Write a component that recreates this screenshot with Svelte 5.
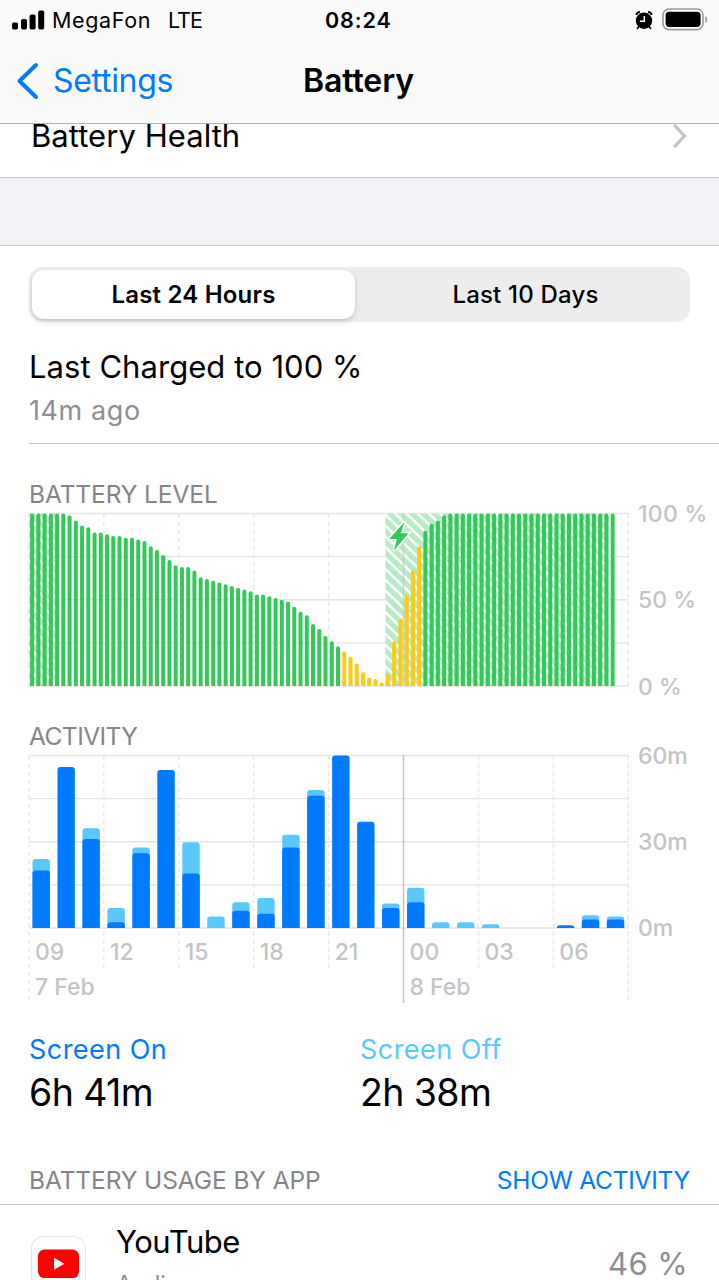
<script>
  // Battery level in percent, one value per quarter of an hour
  const levels = [
    100, 100, 100, 100, 100, 100, 99, 96, 93, 92, 89, 89, 88, 87, 87, 86, 86, 85, 84,
    81, 79, 76, 73, 70, 69, 69, 67, 63, 62, 61, 60, 59, 58, 57, 56, 55, 53, 53,
    52, 51, 50, 49, 46, 43, 41, 36, 33, 29, 26, 23, 20, 17, 13, 8, 5, 4, 2, 7,
    26, 39, 53, 67, 81, 90, 94, 96, 99, ...Array(27).fill(100)
  ];

  // Yellow while low power mode is on
  const lowPower = (i) => i >= 50 && i <= 62;

  // Minutes per hour: [screen on, total]
  const activity = [
    [20, 24], [56, 56], [31, 34.7], [2, 7], [26, 28], [55, 55], [19, 29.8], [0, 4],
    [6, 9], [5, 10.4], [28, 32.4], [46, 48], [60, 60], [37, 37], [7, 8.5], [9, 14],
    [0, 2], [0, 2], [0, 1.3], [0, 0], [0, 0], [1, 1], [3, 4.4], [3, 4]
  ];

  const hours = ['09', '12', '15', '18', '21', '00', '03', '06'];
  const rows = [0, 1, 2, 3, 4];

  const left = 29;
  const chartHeight = 172.5;
  const hourWidth = 24.97;
  const slot = hourWidth / 4;
  const right = left + 24 * hourWidth;

  let selected = $state(0);

  // Bar with rounded top corners standing on the base line
  function bar(x, width, base, height, radius) {
    const r = Math.min(radius, height);
    return `M${x} ${base}v${-(height - r)}q0 ${-r} ${r} ${-r}h${width - 2 * r}q${r} 0 ${r} ${r}v${height - r}z`;
  }
</script>

<main>
  <header>
    <div class="status">
      <svg class="signal" width="32" height="20" viewBox="0 0 32 20">
        <rect x="0" y="12.5" width="6" height="7" rx="1.7" />
        <rect x="9" y="9" width="6" height="10.5" rx="1.7" />
        <rect x="17.6" y="4.5" width="6" height="15" rx="1.7" />
        <rect x="26.2" y="0.5" width="6" height="19" rx="1.7" />
      </svg>
      <span class="carrier">MegaFon</span>
      <span class="network">LTE</span>
      <span class="clock">08:24</span>
      <svg class="alarm" width="18" height="19" viewBox="0 0 18 19">
        <circle cx="9" cy="9.8" r="8.2" />
        <path d="M4 15.5 2 18M14 15.5 16 18" stroke="#000" stroke-width="1.6" />
        <path d="M1.2 3.8Q2.2 1.2 5 1M16.8 3.8Q15.8 1.2 13 1" fill="none" stroke="#000" stroke-width="2" />
        <path d="M9.3 5v5.3H4.8" fill="none" stroke="#fff" stroke-width="1.5" />
      </svg>
      <svg class="cell" width="46" height="23" viewBox="0 0 46 23">
        <rect x="1" y="1" width="40" height="20.6" rx="6" fill="#fff" stroke="#999" stroke-width="1.6" />
        <rect x="3.6" y="3.7" width="35" height="15.2" rx="3.6" />
        <path d="M43.3 8v7q2-1 2-3.5T43.3 8z" fill="#999" />
      </svg>
    </div>
    <nav>
      <svg width="24" height="38" viewBox="0 0 24 38">
        <path d="M20 3 3.5 19 20 35" fill="none" stroke="#007aff" stroke-width="4" stroke-linecap="round" stroke-linejoin="round" />
      </svg>
      <span class="back">Settings</span>
      <h1>Battery</h1>
    </nav>
  </header>

  <div class="health">
    <span>Battery Health</span>
    <svg width="16" height="26" viewBox="0 0 16 26">
      <path d="M3 1.8 12.5 12 3 22.2" fill="none" stroke="#c4c4c6" stroke-width="3.2" stroke-linecap="round" />
    </svg>
  </div>
  <div class="gap"></div>

  <div class="tabs">
    <button class:selected={selected === 0} onclick={() => (selected = 0)}>Last 24 Hours</button>
    <button class:selected={selected === 1} onclick={() => (selected = 1)}>Last 10 Days</button>
  </div>

  <section class="charged">
    <p class="title">Last Charged to 100 %</p>
    <p class="sub">14m ago</p>
  </section>

  <h2 class="level-title">BATTERY LEVEL</h2>
  <svg class="chart" width="719" height="188" viewBox="0 505 719 188">
    <defs>
      <pattern id="hatch" width="7.8" height="7.8" patternUnits="userSpaceOnUse" patternTransform="rotate(44)">
        <rect width="7.8" height="7.8" fill="#b9eac6" />
        <rect width="7.8" height="2.4" fill="#fff" />
      </pattern>
    </defs>
    {#each rows as row}
      <line class="grid" x1={left} x2={right} y1={513.5 + row * 43.13} y2={513.5 + row * 43.13} />
    {/each}
    {#each [...hours, ''] as hour, i}
      {#if hour !== '00'}
        <line class="grid dashed" x1={left + i * 3 * hourWidth} x2={left + i * 3 * hourWidth} y1="513.5" y2="686" />
      {/if}
    {/each}
    <rect x="29" y="513.5" width="27" height="172.5" fill="url(#hatch)" />
    <rect x="385.3" y="513.5" width="223.5" height="172.5" fill="url(#hatch)" />
    <line class="day faint" x1="403.5" x2="403.5" y1="513.5" y2="686" />
    {#each levels as level, i}
      <path
        d={bar(left + slot * (i + 0.5) - 2, 4, 686, (level * chartHeight) / 100, 2)}
        fill={lowPower(i) ? '#fecb0e' : '#34c759'}
      />
    {/each}
    <path
      d="M404.3 522 389.3 539h7.6l-3 11.6 14.6-17.4h-7.4z"
      fill="#34c759" stroke="#fff" stroke-width="3" paint-order="stroke"
    />
    <text x="638" y="521.8" class="axis pct">100 %</text>
    <text x="638" y="608.3" class="axis">50 %</text>
    <text x="638" y="694.6" class="axis">0 %</text>
  </svg>

  <h2 class="activity-title">ACTIVITY</h2>
  <svg class="chart" width="719" height="258" viewBox="0 748 719 258">
    {#each rows as row}
      <line class="grid" x1={left} x2={right} y1={755.5 + row * 43.13} y2={755.5 + row * 43.13} />
    {/each}
    {#each [...hours, ''] as hour, i}
      {@const x = left + i * 3 * hourWidth}
      {#if hour === '00'}
        <line class="day" x1="403.5" x2="403.5" y1="755" y2="1003" />
      {:else}
        <line class="grid dashed" x1={x} x2={x} y1="755.5" y2={i % 8 ? 970 : 1003} />
      {/if}
      <text x={x + 6} y="959.8" class="axis">{hour}</text>
    {/each}
    <text x="35" y="995" class="axis">7 Feb</text>
    <text x="409.5" y="995" class="axis">8 Feb</text>
    {#each activity as [on, total], i}
      {@const x = left + 3.5 + i * hourWidth}
      {#if total > on}
        <path d={bar(x, 17.4, 928, total * 2.875, 3)} fill="#5ac8fa" />
      {/if}
      {#if on}
        <path d={bar(x, 17.4, 928, on * 2.875, 3)} fill="#007aff" />
      {/if}
    {/each}
    <text x="638" y="763.8" class="axis">60m</text>
    <text x="638" y="850" class="axis">30m</text>
    <text x="638" y="936.3" class="axis">0m</text>
  </svg>

  <div class="totals">
    <div class="on"><span>Screen On</span><strong>6h 41m</strong></div>
    <div class="off"><span>Screen Off</span><strong>2h 38m</strong></div>
  </div>

  <div class="usage">
    <h2>BATTERY USAGE BY APP</h2>
    <span class="show">SHOW ACTIVITY</span>
  </div>
  <div class="app">
    <svg class="logo" width="57" height="58" viewBox="0 0 57 58">
      <rect x="1.5" y="1.5" width="54" height="54" rx="12" fill="#fff" stroke="#e3e3e5" />
      <rect x="8" y="14.5" width="41" height="28.6" rx="6.5" fill="#f00" />
      <path d="M24 22.8v12l10.4-6z" fill="#fff" />
    </svg>
    <div class="name">
      <span>YouTube</span>
      <small>Audio</small>
    </div>
    <span class="share">46 %</span>
  </div>
</main>

<style>
  :global(body) {
    margin: 0;
    background: #fff;
  }

  main {
    width: 719px;
    height: 1280px;
    overflow: hidden;
    font-family: Inter, 'Liberation Sans', sans-serif;
    font-size: 31px;
    color: #000;
    background: #fff;
    white-space: nowrap;
  }

  h1, h2, p {
    margin: 0;
    font-weight: 400;
  }

  svg {
    display: block;
    flex: none;
  }

  header {
    height: 123px;
    border-bottom: 1px solid #b4b4b6;
    background: #fafafb;
  }

  .status {
    display: flex;
    align-items: center;
    height: 40px;
    padding-left: 12px;
    font-size: 21.5px;
  }

  .signal {
    margin: 0 8px 1px 0;
    overflow: visible;
  }

  .carrier {
    width: 116px;
    letter-spacing: 0.65px;
  }

  .network {
    width: 157px;
    letter-spacing: -1px;
  }

  .clock {
    width: 310px;
    font-weight: 600;
    letter-spacing: 0.9px;
  }

  .alarm {
    margin-right: 9px;
    overflow: visible;
  }

  .cell {
    margin-bottom: 1px;
  }

  nav {
    display: grid;
    grid-template-columns: 37px 250px auto;
    align-items: center;
    height: 81px;
    padding-left: 16px;
  }

  .back {
    font-size: 32px;
    line-height: 38px;
    color: #007aff;
    letter-spacing: -0.3px;
  }

  h1 {
    font-size: 32px;
    line-height: 38px;
    font-weight: 600;
    letter-spacing: -0.1px;
  }

  .health {
    display: flex;
    justify-content: space-between;
    height: 53px;
    padding: 0 31px;
    line-height: 23px;
    border-bottom: 1px solid #c6c6c8;
    letter-spacing: 0.05px;
  }

  .gap {
    height: 67px;
    background: #f2f2f7;
    border-bottom: 1px solid #c6c6c8;
  }

  .tabs {
    display: grid;
    grid-template-columns: 323px 1fr;
    height: 49px;
    margin: 21px 29px 0;
    padding: 3px;
    border-radius: 14px;
    background: #ededee;
  }

  .tabs button {
    padding: 0 0 0 9px;
    border: 0;
    border-radius: 12px;
    background: none;
    font: 500 24px Inter, 'Liberation Sans', sans-serif;
    letter-spacing: 0.2px;
    color: #000;
  }

  .tabs .selected {
    padding: 0;
    background: #fff;
    box-shadow: 0 3px 6px #0000001f, 0 1px 2px #00000014;
    font-weight: 600;
  }

  .charged {
    height: 121px;
    margin-left: 29px;
    border-bottom: 1px solid #c6c6c8;
  }

  .title {
    padding-top: 25px;
    line-height: 40px;
    letter-spacing: 0.05px;
  }

  .sub {
    padding-top: 6px;
    font-size: 27px;
    line-height: 35px;
    letter-spacing: 0.6px;
    color: #8e8e93;
  }

  h2 {
    margin-left: 29px;
    font-size: 24.5px;
    line-height: 24px;
    letter-spacing: -0.1px;
    color: #858589;
  }

  .level-title {
    padding-top: 38px;
    height: 23px;
  }

  .activity-title {
    padding-top: 31px;
    height: 24px;
    letter-spacing: -0.55px;
  }

  .chart {
    overflow: visible;
  }

  .grid {
    stroke: #e5e5e7;
    stroke-width: 1.3;
  }

  .dashed {
    stroke-dasharray: 4 4;
  }

  .day {
    stroke: #c4c4c6;
    stroke-width: 1.5;
  }

  .faint {
    opacity: 0.7;
  }

  .axis {
    font-size: 23px;
    font-weight: 500;
    fill: #c4c4c6;
  }

  .pct {
    letter-spacing: 0.3px;
  }

  .totals {
    display: grid;
    grid-template-columns: 331px auto;
    height: 144px;
    margin-left: 29px;
    padding-top: 18px;
  }

  .totals div {
    display: grid;
    grid-template-rows: 52px 36px;
    line-height: 52px;
  }

  .totals span {
    font-size: 27px;
    letter-spacing: 0.45px;
  }

  .totals strong {
    font-size: 37.5px;
    font-weight: 400;
    line-height: 34px;
    letter-spacing: -0.6px;
  }

  .on span {
    color: #007aff;
  }

  .off span {
    color: #5ac8fa;
  }

  .usage {
    display: flex;
    justify-content: space-between;
    height: 36px;
    padding-right: 29px;
    border-bottom: 1px solid #c6c6c8;
    font-size: 24.5px;
    line-height: 24px;
  }

  .show {
    color: #007aff;
    letter-spacing: -0.25px;
  }

  .app {
    display: flex;
    padding: 30px 31px 0 30px;
  }

  .name {
    display: grid;
    width: 494px;
    margin: -13px 0 0 29px;
    line-height: 40px;
    letter-spacing: -0.45px;
  }

  .name small {
    font-size: 24px;
    line-height: 46px;
    color: #8e8e93;
  }

  .share {
    line-height: 58px;
    letter-spacing: 0.4px;
    color: #8e8e93;
  }
</style>
